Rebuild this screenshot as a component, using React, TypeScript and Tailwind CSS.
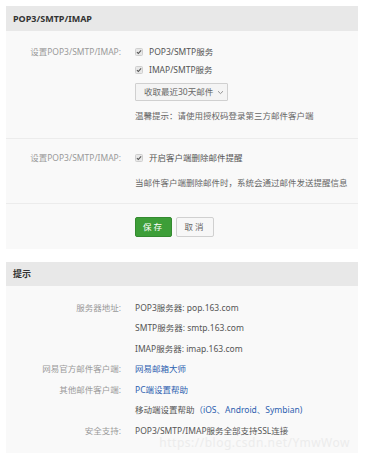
import React from "react";

const font = { fontFamily: '"Noto Sans", "Noto Sans CJK SC", sans-serif' };

function Check() {
  return (
    <svg width="8" height="8" viewBox="0 0 8 8" className="shrink-0">
      <rect x="0.5" y="0.5" width="7" height="7" rx="1" fill="#e8e8e8" stroke="#cfcfcf" />
      <path d="M1.9 4.2 L3.3 5.5 L6.1 2.3" fill="none" stroke="#555" strokeWidth="1.1" />
    </svg>
  );
}

function Row({ label, children, h = "h-[18px]" }: { label?: string; children: React.ReactNode; h?: string }) {
  return (
    <div className={`flex items-center ${h}`}>
      <div className="w-[115px] shrink-0 text-right text-[#9a9a9a] whitespace-nowrap">{label}</div>
      <div className="ml-[14px] flex items-center gap-[4px] text-[#555] whitespace-nowrap">{children}</div>
    </div>
  );
}

export default function App() {
  return (
    <div className="w-[366px] h-[459px] bg-white p-[6px] text-[8.5px] relative overflow-hidden" style={font}>
      <div className="w-[352px] bg-[#f9f9f9]">
        <div className="h-[25px] bg-[#e8e8e8] flex items-center px-[7px] font-bold text-[9px] text-[#333]">
          POP3/SMTP/IMAP
        </div>
        <div className="pt-[12px] pb-[13px]">
          <Row label="设置POP3/SMTP/IMAP:">
            <Check />
            <span className="ml-[2px]">POP3/SMTP服务</span>
          </Row>
          <Row>
            <Check />
            <span className="ml-[2px]">IMAP/SMTP服务</span>
          </Row>
          <div className="mt-[4px] ml-[129px] w-[93px] h-[18px] border border-[#d0d0d0] bg-[#f4f4f4] rounded-[1px] flex items-center pl-[8px] text-[#666] whitespace-nowrap">
            <span>收取最近30天邮件</span>
            <svg width="7" height="5" viewBox="0 0 7 5" className="ml-[4px] shrink-0">
              <path d="M1 1.2 L3.5 3.6 L6 1.2" fill="none" stroke="#888" strokeWidth="0.9" />
            </svg>
          </div>
          <div className="mt-[6px]">
            <Row>
              <span className="text-[#666]">温馨提示：请使用授权码登录第三方邮件客户端</span>
            </Row>
          </div>
        </div>
        <div className="h-px bg-[#ececec]" />
        <div className="pt-[10px] pb-[11px]">
          <Row label="设置POP3/SMTP/IMAP:">
            <Check />
            <span className="ml-[2px]">开启客户端删除邮件提醒</span>
          </Row>
          <div className="mt-[7px]">
            <Row>
              <span className="text-[#666]">当邮件客户端删除邮件时，系统会通过邮件发送提醒信息</span>
            </Row>
          </div>
        </div>
        <div className="h-px bg-[#ececec]" />
        <div className="pt-[13px] pb-[12px] pl-[129px] flex gap-[4px]">
          <div className="w-[37px] h-[20px] rounded-[2px] bg-[#3d9e38] border border-[#348a30] text-white flex items-center justify-center tracking-[2px]">
            保存
          </div>
          <div className="w-[38px] h-[20px] rounded-[2px] bg-[#f7f7f7] border border-[#d0d0d0] text-[#666] flex items-center justify-center tracking-[2px]">
            取消
          </div>
        </div>
      </div>

      <div className="w-[352px] bg-[#f9f9f9] mt-[13px]">
        <div className="h-[24px] bg-[#e8e8e8] flex items-center px-[7px] font-bold text-[9px] text-[#333]">
          提示
        </div>
        <div className="pt-[12px] pb-[11px]">
          <Row h="h-[20.5px]" label="服务器地址:">POP3服务器: pop.163.com</Row>
          <Row h="h-[20.5px]">SMTP服务器: smtp.163.com</Row>
          <Row h="h-[20.5px]">IMAP服务器: imap.163.com</Row>
          <Row h="h-[20.5px]" label="网易官方邮件客户端:">
            <span className="text-[#2d5fb0]">网易邮箱大师</span>
          </Row>
          <Row h="h-[20.5px]" label="其他邮件客户端:">
            <span className="text-[#2d5fb0]">PC端设置帮助</span>
          </Row>
          <Row h="h-[20.5px]">
            <span>
              移动端设置帮助<span className="text-[#2d5fb0]">（iOS、Android、Symbian)</span>
            </span>
          </Row>
          <Row h="h-[20.5px]" label="安全支持:">POP3/SMTP/IMAP服务全部支持SSL连接</Row>
        </div>
      </div>

      <div className="absolute right-[16px] top-[434px] text-[12px] text-[#ececec] tracking-[0.5px] pointer-events-none">
        https://blog.csdn.net/YmwWow
      </div>
    </div>
  );
}
